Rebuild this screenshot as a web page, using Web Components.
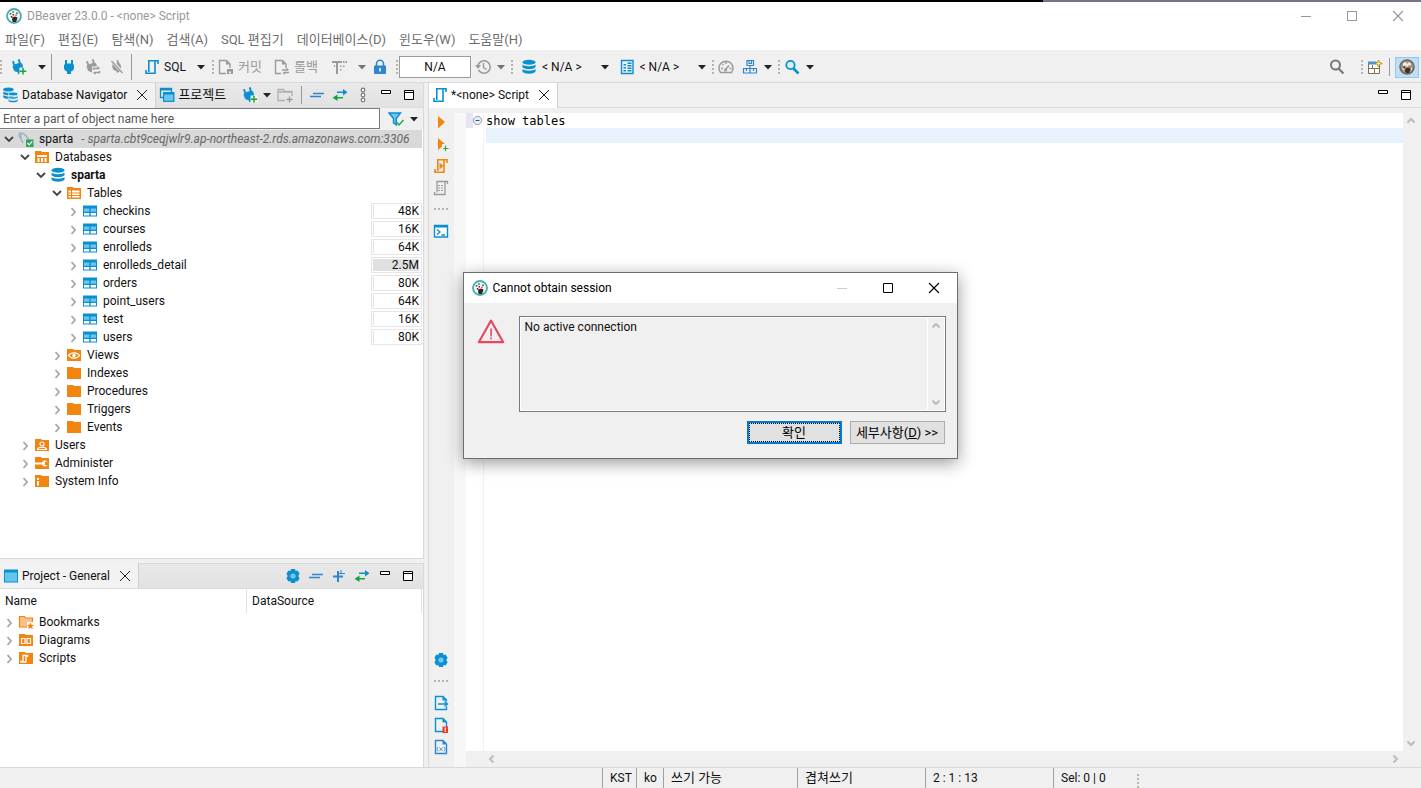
<!DOCTYPE html>
<html lang="ko">
<head>
<meta charset="utf-8">
<title>DBeaver 23.0.0 - &lt;none&gt; Script</title>
<style>
  html, body {
    margin: 0;
    height: 100%;
    overflow: hidden;
  }
  body {
    font-family: Roboto, "Noto Sans CJK KR", sans-serif;
    font-size: 12px;
    line-height: 16px;
    color: #111;
    background: #f0f0f0;
  }
</style>
</head>
<body>
<app-window></app-window>

<script>
const B = '#0a8fd0';
const O = '#f28410';
const G = '#14a53c';
const N = '#9a9a9a';

const plug = (c) => `<path fill="${c}" d="M3 5.500h1V1h2v3.500h4V1h2v4.500h1v3.500c0 2-1.500 3-3 3.500V15H6v-2.500C4.500 12 3 11 3 9z"/>`;
const plugTilt = (c) => `<g transform="rotate(-18 7 8) translate(-1 0)">${plug(c)}</g>`;
const plus = `<path fill="#f0f0f0" d="M8.500 8.500H16V16H8.500z"/><path d="M12 9v6.500M8.800 12.200h6.500" stroke="${G}" stroke-width="1.500" fill="none"/>`;
const folder = (c = O) => `<path fill="${c}" d="M1 2h6l1 1h7v11H1z"/>`;
const beaver = (ring) => `
  <circle cx="8" cy="8" r="7" fill="#f7f4ef" stroke="${ring}" stroke-width="1.800"/>
  <path fill="#4a3a32" d="M4 5h1.500l-.5 1.500H3.500zM6 3.500h2v1H6zM10 4.500h1.500L12 6h-1.500zM6.500 6H8v1.500H6.500zM9.500 6.500h1V8h-1zM4.500 8H6l1 1.500-1.500.5z"/>
  <path fill="#33251f" d="M6.500 9.500L9 8.500l2.500 1-.5 2-1 2.500H7l-1-2z"/>`;
const cyl = (c) => `<g fill="${c}"><ellipse cx="8" cy="3.200" rx="6.500" ry="2.500"/><path d="M1.500 5.500c2 2.300 11 2.300 13 0v2.800c-2 2.500-11 2.500-13 0zM1.500 10c2 2.300 11 2.300 13 0v2.800c-2 2.600-11 2.600-13 0z"/></g>`;
const script = (c) => `<path fill="none" stroke="${c}" stroke-width="1.600" d="M14 5V1.800H4.800V13M2 11v3.200h9V2"/>`;
const page = (c) => `<path fill="none" stroke="${c}" stroke-width="1.400" d="M2.500 1.500h7.500l3.500 3.500v9.500h-11z"/><path fill="${c}" d="M9.500 1v4.500H14z"/>`;
const gear = `<path fill="${B}" d="M6 1h4l.6 2 2-.4 2 3.200L13.300 8l1.300 2.200-2 3.200-2-.4L10 15H6l-.6-2-2 .4-2-3.200L2.700 8 1.400 5.800l2-3.200 2 .4z"/><circle cx="8" cy="8" r="2.600" fill="#72c8ee"/>`;
const grid = `<path fill="${B}" d="M1 2.500h14v11H1z"/><path fill="#6cc5ec" d="M2 5.500h5.300v3.300H2zm6.700 0H14v3.300H8.700z"/><path fill="#fff" d="M2 10h5.300v2.500H2zm6.700 0H14v2.500H8.700z"/>`;

const ICONS = {
  beaver: beaver('#3fb0b8'),
  perspective: `<circle cx="8" cy="8" r="7" fill="#a39182" stroke="#6d655f" stroke-width="1.500"/>
    <path fill="#efe9e2" d="M4 4l3-1 1 2 2-2 2 1.500v2L10 6 8.500 8 6 6.500 4 7zM3 9l2 1v2zM12 9h1.500L12 12z"/>
    <path fill="#3c2f28" d="M6.500 9.500L9 8.500l2.500 1-.5 2-1 2.500H7l-1-2zM4.500 7.500H6V9H4.500z"/>`,
  plugAdd: plugTilt(B) + plus,
  plug: plug(B),
  plugSync: plugTilt(N) + `<path fill="#f0f0f0" d="M7 7.500h9V16H7z"/><path stroke="${N}" stroke-width="1.400" fill="none" d="M8.500 11V9.500H14M12.500 8l2 1.500M14.500 12v1.500H9M10.500 15l-2-1.500"/>`,
  plugOff: `<g transform="scale(.85) translate(2 1)">${plugTilt(N)}</g><path d="M2 1l12 13" stroke="#f0f0f0" stroke-width="3"/><path d="M2.500 2L13.500 14" stroke="${N}" stroke-width="1.200"/>`,
  script: script(B),
  commit: `<path fill="none" stroke="${N}" stroke-width="1.400" d="M8 14.500H1.500v-13H8.500l3.500 3.500v4"/><path fill="${N}" d="M8 1v4.500h4.500zM9 10h6v5H9z"/><path fill="#f0f0f0" d="M11 12.500h2v2h-2z"/>`,
  rollback: `<path fill="none" stroke="${N}" stroke-width="1.400" d="M7 14.500H1.500v-13H8.500l3.500 3.500v4"/><path fill="${N}" d="M8 1v4.500h4.500z"/><path fill="none" stroke="${N}" stroke-width="1.300" d="M8 11h6M10 13.500h5M12.500 9.500l2 1.500M11 15l-2-1.500"/>`,
  tx: `<path fill="${N}" d="M1 2h10v2H7v11H5V4H1zM12 2h1.500v2H12zM14.500 2H16v2h-1.500zM9 6.500h1.500V8H9zM12 6.500h1.500V8H12zM9 10h1.500v1.500H9zM3 6h1v2H3z"/>`,
  lock: `<path fill="none" stroke="#2f86cf" stroke-width="1.600" d="M4.500 7V4.800a3.500 3.500 0 0 1 7 0V7"/><rect x="2" y="6.500" width="12" height="8.500" rx="1" fill="#2f86cf"/><path fill="#fff" d="M7.300 9h1.500v3.500H7.300z"/>`,
  clock: `<circle cx="9" cy="8" r="6.200" fill="none" stroke="${N}" stroke-width="1.500"/><path fill="#f0f0f0" d="M0 7h4v4H0z"/><path fill="${N}" d="M0 6h6L3 10z"/><path fill="none" stroke="${N}" stroke-width="1.400" d="M8.500 4v4.500l3 2"/>`,
  db: cyl(B),
  dbs: `<g transform="translate(-1 0) scale(.8)">${cyl(B)}</g><g transform="translate(4 4.500) scale(.76)" stroke="#f2f2f2" stroke-width="1">${cyl(B)}</g>`,
  schema: `<path fill="none" stroke="${B}" stroke-width="1.400" d="M2.500 1.500H14v13H2.500z"/><path fill="${B}" d="M4.500 5H7v1.500H4.500zM4.500 8H7v1.500H4.500zM4.500 11H7v1.500H4.500zM8.500 3.500h4V5h-4zM8.500 6h4v1.500h-4zM8.500 8.500h4V10h-4zM8.500 11h4v1.500h-4z"/>`,
  gauge: `<path fill="none" stroke="${N}" stroke-width="1.500" d="M2.500 13.500a7 7 0 1 1 11 0z"/><path fill="none" stroke="${N}" stroke-width="1.500" d="M7 11l4-4.500M3 9.500h2M8 3v2M4.500 5l1 1M11.500 9.500h2"/><circle cx="7.500" cy="11" r="1.500" fill="${N}"/>`,
  boxes: `<path fill="none" stroke="#2f86cf" stroke-width="1.200" d="M5 1.500h6.500v5H5zM1.500 9.500h6.500V14H1.500zM8 9.500h6.500V14H8zM8 6.500v3M7 2v2.500h2.500V2M4.500 10v2M11.500 10v2"/>`,
  find: `<circle cx="6.500" cy="6" r="4.200" fill="#d5effb" stroke="${B}" stroke-width="1.800"/><path d="M9.500 9.500l5 5" stroke="${B}" stroke-width="2.600"/>`,
  search: `<circle cx="6.500" cy="6" r="4.500" fill="none" stroke="#777" stroke-width="2"/><path d="M9.500 9.500l5 5" stroke="#777" stroke-width="2.200"/>`,
  openPerspective: `<path fill="#fff" stroke="#7a7350" d="M1.500 3.500h11v11h-11z"/><path fill="#4d90d0" d="M1 2.500h8v3H1z"/><path stroke="#7a7350" fill="none" d="M1 9.500h11.500M5.500 6v3.500M7.500 9.500V15"/><path fill="#fbe9a4" stroke="#c0901c" d="M11.500 1l1 2.500 2.800 1-2.800 1-1 2.500-1-2.500-2.300-1 2.300-1z"/>`,
  windows: `<path fill="none" stroke="${B}" stroke-width="1.300" d="M4 10.500H1.500v-9h11V5"/><path fill="${B}" d="M1 1h12v2.500H1zM4 5h11.500v10H4z"/><path fill="#6cc5ec" d="M5.200 7.500h9v6.300h-9z"/>`,
  window: `<path fill="${B}" d="M1 1.500h14v13H1z"/><path fill="#62c6ee" d="M2 4.500h12v9H2z"/>`,
  folderAdd: `<path fill="none" stroke="#b0b0b0" stroke-width="1.300" d="M8 13.500H1v-11h5.500l1 2H15V9M1 5h14"/><path stroke="#999" stroke-width="1.300" d="M12.500 9.500v6M9.500 12.500h6"/>`,
  collapse: `<path d="M4 6.500h11M1 9.500h11" stroke="#2f86cf" stroke-width="1.500"/>`,
  expand: `<path d="M7 3v11M2 8.500h10" stroke="#2f86cf" stroke-width="2"/><path d="M10 2v4M8 5.500h6" stroke="#2f86cf" stroke-width="1"/>`,
  link: `<path fill="${B}" d="M5 4.500h6V2l4.500 3.300L11 8.500V6H5z"/><path fill="${G}" d="M11 10H5.500V7.500L.5 10.800 5.500 14v-2.500H11z"/>`,
  more: `<g fill="#fff" stroke="#777" stroke-width="1.200"><circle cx="8" cy="3" r="1.800"/><circle cx="8" cy="8" r="1.800"/><circle cx="8" cy="13" r="1.800"/></g>`,
  min: `<path fill="#fff" stroke="#000" d="M3.500 3.500h9v3h-9z"/>`,
  max: `<path fill="#fff" stroke="#000" d="M3.500 3.500h9v9h-9z"/><path stroke="#000" d="M3 5.500h10"/>`,
  close: `<path stroke="#222" d="M3 3l10 10M13 3L3 13"/>`,
  filter: `<path fill="#6cc5ec" stroke="${B}" stroke-width="1.400" d="M1 2h11.500L8.300 7.500V14L5.500 12V7.500z"/><path fill="none" stroke="${G}" stroke-width="1.300" d="M9 11.500l2 2.500 4.500-5"/>`,
  mysql: `<path fill="none" stroke="#8fabc0" stroke-width="1.200" d="M2 7c-1-2-1-4 0-5 3 0 6 2 7.500 5l2 2M3 3v5l2 4"/><path fill="#2fa55a" d="M8 8.500h7.500V16H8z"/><path fill="none" stroke="#fff" stroke-width="1.200" d="M9.500 12l1.700 1.800 3-3.500"/>`,
  folder: folder(),
  folderDb: folder() + '<path fill="#fff" d="M3 6h10v2H3zM3.500 9h2v4h-2zM7 9h2v4H7zM10.500 9h2v4h-2z"/>',
  folderTables: folder() + '<path fill="#fff" d="M2.500 5.500h2.500v2H2.500zM6 5.500h7.500v2H6zM2.500 8.500h2.500v1.500H2.500zM6 8.500h7.500v1.500H6zM2.500 11h2.500v1.500H2.500zM6 11h7.500v1.500H6z"/>',
  folderViews: folder() + '<path fill="none" stroke="#fff" stroke-width="1.200" d="M2.500 8.500C5 5 11 5 13.500 8.500 11 12 5 12 2.500 8.500z"/><circle cx="8" cy="8.500" r="1.700" fill="#fff"/>',
  folderUsers: folder() + '<circle cx="8" cy="7" r="2" fill="none" stroke="#fff" stroke-width="1.200"/><path fill="none" stroke="#fff" stroke-width="1.200" d="M3.500 12.500c0-3 9-3 9 0z"/>',
  folderAdmin: folder() + '<path fill="#fff" d="M1 7.500h7c1-2.500 4-2.500 5.500-1l-2.500.5v3l2.500.5c-1.500 1.500-4.500 1.500-5.500-1H1z"/>',
  folderInfo: folder() + '<path fill="#fff" d="M3 5h2v2H3zM3 8h2v4.500H3z"/>',
  folderMark: `<path fill="#fdbf8b" stroke="${O}" stroke-width="1.200" d="M1.500 2.500h5l1 1.500h7v9h-13z"/><path fill="#fff" d="M9 8h7v8H9z"/><path fill="${O}" d="M12.500 8.500l1 2.200 2.500.3-1.800 1.600.5 2.400-2.200-1.200-2.200 1.200.5-2.400L9 11l2.500-.3z"/>`,
  folderDiagram: folder() + `<path fill="none" stroke="#fff" stroke-width="1.200" d="M3.500 6.500h3.500v5H3.500zM9 6.500h3.500v5H9z"/>`,
  folderScript: folder() + `<path fill="none" stroke="#fff" stroke-width="1.300" d="M9.500 7V5.500H5V12M3 10.500V12h5V6"/>`,
  table: grid,
  run: `<path fill="${O}" d="M5 2l7 6-7 6.500z"/>`,
  runNew: `<path fill="${O}" d="M5 2l7 6-7 6z"/><path fill="#f0f0f0" d="M9 8h7v8H9z"/><path d="M12.500 9.500V15M10 12.500h5.500" stroke="#3aa64a" stroke-width="1.200"/>`,
  runScript: script(O) + `<path fill="${O}" d="M6.500 4.500l4 3.500-4 3.500z"/>`,
  plan: `<path fill="none" stroke="${N}" stroke-width="1.300" d="M14.500 4V1.500H4v11M1.500 12v2.500H12V2"/><path stroke="${N}" stroke-dasharray="2 1" d="M5 5.500h6M5 8h6M5 10.500h6"/>`,
  console: `<path fill="#fff" stroke="${B}" stroke-width="1.400" d="M1.500 2.500h13v11.500h-13z"/><path fill="${B}" d="M1 2h14v2.500H1z"/><path fill="none" stroke="${B}" stroke-width="1.400" d="M4 6.500L7 9l-3 2.500M8.500 12H12"/>`,
  gear,
  export: page(B) + `<path fill="#f0f0f0" d="M12 6.500h3v5h-3z"/><path fill="none" stroke="${B}" stroke-width="1.400" d="M5 9h9M11.500 6.500L14.500 9l-3 2.500"/>`,
  log: page(B) + `<path fill="#ee3a24" d="M9.500 9.500H15V16H9.500z"/><path fill="#fff" d="M11.700 10.500h1.300v3h-1.300zM11.700 14h1.300v1h-1.300z"/>`,
  vars: page('#2f86cf') + `<path fill="none" stroke="#4f9bd8" d="M5 8c-1.200 1.500-1.200 3 0 4.500M11 8c1.200 1.500 1.200 3 0 4.500M6.500 8.500l3 3.500M9.500 8.500l-3 3.500"/>`,
  warning: `<path fill="none" stroke="#e8485c" stroke-width="1.200" stroke-linejoin="round" d="M8 1.500l7 12.300H1z"/><path fill="#e8485c" d="M7.600 6h.9v4.500h-.9zM7.600 11.200h.9v1h-.9z"/>`,
  fold: `<circle cx="8" cy="8" r="6" fill="#e4edf6" stroke="#8a9fb5" stroke-width="1.400"/><path d="M5 8h6" stroke="#456" stroke-width="1.500"/>`,
  down: `<path fill="#222" d="M4 6h8l-4 4.500z"/>`,
  chevOpen: `<path fill="none" stroke="#444" stroke-width="1.800" d="M4 6l4 4 4-4"/>`,
  chevShut: `<path fill="none" stroke="#a6a6a6" stroke-width="1.800" d="M6.500 5L10 9l-3.500 4"/>`,
  arrowUp: `<path fill="none" stroke="currentColor" stroke-width="2" d="M4.500 9.500L8 6l3.500 3.500"/>`,
  arrowDown: `<path fill="none" stroke="currentColor" stroke-width="2" d="M4.500 6.500L8 10l3.500-3.500"/>`,
  arrowLeft: `<path fill="none" stroke="currentColor" stroke-width="2" d="M9.500 4.500L6 8l3.500 3.500"/>`,
  arrowRight: `<path fill="none" stroke="currentColor" stroke-width="2" d="M6.500 4.500L10 8l-3.500 3.500"/>`,
  winMin: `<path stroke="currentColor" d="M3 8.500h10"/>`,
  winMax: `<path fill="none" stroke="currentColor" d="M3.500 3.500h9v9h-9z"/>`,
  winClose: `<path stroke="currentColor" stroke-width="1.200" d="M3 3l10 10M13 3L3 13"/>`
};

class BaseElement extends HTMLElement {
  constructor() {
    super();
    this.root = this.attachShadow({ mode: 'open' });
  }

  connectedCallback() {
    this.render();
  }
}

class DbIcon extends BaseElement {
  render() {
    this.root.innerHTML = `
      <style>
        :host {
          display: inline-block;
          flex: none;
          width: 16px;
          height: 16px;
        }
        svg {
          display: block;
          width: 100%;
          height: 100%;
        }
      </style>
      <svg viewBox="0 0 16 16" aria-hidden="true">${ICONS[this.getAttribute('name')] || ''}</svg>
    `;
  }
}

/* flat button with an icon and, if something is slotted, a caption */
class ToolButton extends BaseElement {
  render() {
    const label = this.getAttribute('label') || this.getAttribute('icon');
    this.root.innerHTML = `
      <style>
        :host {
          display: block;
          flex: none;
        }
        button {
          display: flex;
          align-items: center;
          justify-content: center;
          gap: 4px;
          box-sizing: border-box;
          width: 100%;
          height: var(--button-height, 24px);
          min-width: var(--button-width, 24px);
          margin: 0;
          padding: 0 var(--button-pad, 4px);
          border: 0;
          background: none;
          font: inherit;
          color: inherit;
          white-space: nowrap;
        }
        :host([icon="down"]) button {
          min-width: 12px;
          width: 12px;
          padding: 0;
        }
        :host([dim]) button {
          color: #9a9a9a;
        }
        :host([dim][icon="down"]) {
          opacity: 0.6;
        }
        :host([active]) button {
          background: #bfdff7;
          border: 1px solid #90c8f6;
          padding: 0 3px;
          height: 21px;
        }
      </style>
      <button type="button" title="${label}" aria-label="${this.textContent.trim() || label}">
        <db-icon name="${this.getAttribute('icon')}"></db-icon><slot></slot>
      </button>
    `;
  }
}

/* dotted grip in front of a movable group */
class GripDots extends BaseElement {
  render() {
    this.root.innerHTML = `
      <style>
        :host {
          display: block;
          flex: none;
          width: 2px;
          height: 14px;
          background: repeating-linear-gradient(#b9b2a6 0 2px, transparent 2px 4px);
        }
        :host([flat]) {
          width: 14px;
          height: 2px;
          background: repeating-linear-gradient(90deg, #b9b2a6 0 2px, transparent 2px 4px);
        }
      </style>
    `;
  }
}

class WindowControls extends BaseElement {
  render() {
    this.root.innerHTML = `
      <style>
        :host {
          display: flex;
        }
        button {
          display: grid;
          place-items: center;
          width: 46px;
          height: 28px;
          padding: 0;
          border: 0;
          background: none;
          color: inherit;
        }
        :host([fixed]) button:first-of-type {
          color: #ccc;
        }
      </style>
      <button type="button" aria-label="최소화"><db-icon name="winMin"></db-icon></button>
      <button type="button" aria-label="최대화"><db-icon name="winMax"></db-icon></button>
      <button type="button" aria-label="닫기"><db-icon name="winClose"></db-icon></button>
    `;
  }
}

class TitleBar extends BaseElement {
  render() {
    this.root.innerHTML = `
      <style>
        :host {
          display: flex;
          align-items: center;
          height: 28px;
          padding-left: 6px;
          border-top: 2px solid;
          border-image: linear-gradient(90deg, #000 73.3%, #77738a 73.3%) 2;
          background: #fff;
          color: #999;
        }
        span {
          flex: 1;
          padding-left: 5px;
        }
      </style>
      <db-icon name="beaver"></db-icon>
      <span><slot></slot></span>
      <window-controls></window-controls>
    `;
  }
}

class MenuBar extends BaseElement {
  render() {
    const items = ['파일(F)', '편집(E)', '탐색(N)', '검색(A)', 'SQL 편집기', '데이터베이스(D)', '윈도우(W)', '도움말(H)'];
    this.root.innerHTML = `
      <style>
        :host {
          display: flex;
          gap: 13px;
          height: 20px;
          padding-left: 5px;
          background: #fff;
        }
        button {
          padding: 0;
          border: 0;
          background: none;
          font: inherit;
          font-size: 13px;
          color: #6d6d6d;
        }
      </style>
      ${items.map((item) => `<button type="button">${item}</button>`).join('')}
    `;
  }
}

class ToolBar extends BaseElement {
  render() {
    this.root.innerHTML = `
      <style>
        :host {
          display: flex;
          align-items: center;
          box-sizing: border-box;
          height: 33px;
          padding-top: 2px;
          border-bottom: 1px solid #d9d9d9;
          background: #f0f0f0;
        }
        .group {
          display: flex;
          align-items: center;
          flex: none;
        }
        .main { width: 212px; }
        .tx { width: 184px; }
        .mode { width: 115px; }
        .source { width: 201px; }
        .tools { width: 66px; }
        .push {
          margin-left: auto;
          padding-right: 2px;
        }
        .gap { margin-left: 5px; }
        hr {
          flex: none;
          width: 1px;
          height: 26px;
          margin: 0 5px 0 3px;
          border: 0;
          background: #999;
        }
        hr.wide {
          margin: 0 8px 0 2px;
        }
        hr.short {
          height: 18px;
          margin-left: 2px;
        }
        .ko {
          font-size: 13px;
        }
        .ko + .ko {
          margin-left: 4px;
        }
        input {
          box-sizing: border-box;
          width: 72px;
          height: 22px;
          margin-left: 1px;
          padding: 0;
          border: 1px solid #9b9b9b;
          background: #fff;
          font: inherit;
          color: inherit;
          text-align: center;
        }
        .combo {
          display: flex;
          align-items: center;
          width: 92px;
          padding: 0 2px 0 4px;
        }
        .combo:first-of-type {
          padding-left: 8px;
        }
        select {
          flex: 1;
          appearance: none;
          padding: 0 0 0 5px;
          border: 0;
          background: none;
          font: inherit;
          color: inherit;
          outline: 0;
        }
      </style>
      <div class="group main">
        <grip-dots></grip-dots>
        <tool-button class="gap" icon="plugAdd" label="New connection"></tool-button>
        <tool-button class="gap" icon="down" label="New connection menu"></tool-button>
        <hr>
        <tool-button icon="plug" label="Connect"></tool-button>
        <tool-button icon="plugSync" label="Reconnect" dim></tool-button>
        <tool-button icon="plugOff" label="Disconnect" dim></tool-button>
        <hr class="wide">
        <tool-button icon="script">SQL</tool-button>
        <tool-button class="gap" icon="down" label="SQL menu"></tool-button>
      </div>
      <div class="group tx">
        <grip-dots></grip-dots>
        <tool-button class="ko" icon="commit" dim>커밋</tool-button>
        <tool-button class="ko" icon="rollback" dim>롤백</tool-button>
        <tool-button class="gap" icon="tx" label="Transaction mode" dim></tool-button>
        <tool-button class="gap" icon="down" label="Transaction menu" dim></tool-button>
        <tool-button icon="lock" label="Auto commit"></tool-button>
      </div>
      <div class="group mode">
        <grip-dots></grip-dots>
        <input value="N/A" aria-label="Transaction log" readonly>
        <tool-button icon="clock" label="History" dim></tool-button>
        <tool-button icon="down" label="History menu" dim></tool-button>
      </div>
      <div class="group source">
        <grip-dots></grip-dots>
        <div class="combo"><db-icon name="db"></db-icon><select aria-label="Active datasource"><option>&lt; N/A &gt;</option></select><db-icon name="down"></db-icon></div>
        <div class="combo"><db-icon name="schema"></db-icon><select aria-label="Active schema"><option>&lt; N/A &gt;</option></select><db-icon name="down"></db-icon></div>
      </div>
      <div class="group tools">
        <grip-dots></grip-dots>
        <tool-button icon="gauge" label="Dashboard" dim></tool-button>
        <tool-button icon="boxes" label="Task"></tool-button>
        <tool-button icon="down" label="Task menu"></tool-button>
      </div>
      <div class="group">
        <grip-dots></grip-dots>
        <tool-button icon="find" label="Search"></tool-button>
        <tool-button icon="down" label="Search menu"></tool-button>
      </div>
      <div class="group push">
        <tool-button icon="search" label="Quick access"></tool-button>
        <grip-dots style="margin-left: 12px"></grip-dots>
        <tool-button icon="openPerspective" label="Open perspective"></tool-button>
        <hr class="short">
        <tool-button icon="perspective" label="DBeaver" active></tool-button>
      </div>
    `;
  }
}

/* view header: tabs on the left, slotted actions on the right */
class ViewHeader extends BaseElement {
  render() {
    this.root.innerHTML = `
      <style>
        :host {
          --button-width: 23px;
          --button-pad: 0px;
          display: flex;
          align-items: center;
          flex: none;
          box-sizing: border-box;
          height: 25px;
          padding-right: 4px;
          border-bottom: 1px solid #dcdcdc;
          background: linear-gradient(#e9e9e9, #e2e2e2);
        }
        :host([plain]) {
          background: #f0f0f0;
        }
        .actions {
          display: flex;
          align-items: center;
          margin-left: auto;
        }
      </style>
      <slot name="tabs"></slot>
      <div class="actions"><slot></slot></div>
    `;
  }
}

class ViewTab extends BaseElement {
  render() {
    const close = this.hasAttribute('selected') ? '<button type="button" aria-label="닫기"><db-icon name="close"></db-icon></button>' : '';
    this.root.innerHTML = `
      <style>
        :host {
          display: flex;
          align-items: center;
          box-sizing: border-box;
          height: 25px;
          padding: 0 5px 0 3px;
          white-space: nowrap;
        }
        :host([selected]) {
          border-right: 1px solid #d0d0d0;
          background: var(--tab-fill, #f2f2f2);
        }
        span {
          padding: 0 7px 0 3px;
        }
        button {
          display: flex;
          padding: 0;
          border: 0;
          background: none;
        }
      </style>
      <db-icon name="${this.getAttribute('icon')}"></db-icon>
      <span><slot></slot></span>${close}
    `;
  }
}

class TreeRow extends BaseElement {
  render() {
    const level = Number(this.getAttribute('level')) || 0;
    const state = this.getAttribute('state') === 'open' ? 'chevOpen' : 'chevShut';
    const size = this.getAttribute('size');
    const note = this.getAttribute('note');
    this.root.innerHTML = `
      <style>
        :host {
          display: flex;
          align-items: center;
          height: 18px;
          padding-left: ${level * 16 + 1}px;
          margin-right: 1px;
          white-space: nowrap;
        }
        :host([selected]) {
          background: #d9d9d9;
        }
        :host([strong]) {
          font-weight: bold;
        }
        .name {
          padding-left: 5px;
        }
        db-icon + db-icon {
          margin-left: 1px;
        }
        i {
          padding-left: 8px;
          color: #666;
        }
        .size {
          box-sizing: border-box;
          width: 51px;
          height: 16px;
          margin-left: auto;
          padding: 0 2px 0 0;
          border: 1px solid #e5e5e5;
          background: linear-gradient(#e0e0e0, #e0e0e0) 1px 1px / 1px 12px no-repeat;
          line-height: 14px;
          text-align: right;
        }
        .size.big {
          background-size: 46px 12px;
        }
      </style>
      <db-icon name="${state}"></db-icon>
      <db-icon name="${this.getAttribute('icon')}"></db-icon>
      <span class="name"><slot></slot></span>
      ${note ? `<i>${note}</i>` : ''}
      ${size ? `<span class="size ${size.endsWith('M') ? 'big' : ''}">${size}</span>` : ''}
    `;
  }
}

class DatabaseNavigator extends BaseElement {
  render() {
    const table = (name, size) => `<tree-row level="4" icon="table" size="${size}">${name}</tree-row>`;
    this.root.innerHTML = `
      <style>
        :host {
          display: flex;
          flex-direction: column;
          box-sizing: border-box;
          border-right: 1px solid #d9d9d9;
          border-bottom: 1px solid #d9d9d9;
          background: #fff;
        }
        .filter {
          display: flex;
          align-items: center;
          height: 22px;
          padding-right: 3px;
          background: #f0f0f0;
        }
        input {
          flex: 1;
          box-sizing: border-box;
          min-width: 0;
          height: 21px;
          align-self: flex-start;
          margin-right: 4px;
          padding: 0 3px;
          border: 1px solid #7a7a7a;
          border-left: 0;
          background: #fff;
          font: inherit;
        }
        input::placeholder {
          color: #555;
          opacity: 1;
        }
        hr {
          width: 1px;
          height: 18px;
          margin: 0 3px 0 5px;
          border: 0;
          background: #999;
        }
        .ko {
          font-size: 13px;
        }
      </style>
      <view-header>
        <view-tab slot="tabs" icon="dbs" selected>Database Navigator</view-tab>
        <view-tab slot="tabs" class="ko" icon="windows">프로젝트</view-tab>
        <tool-button icon="plugAdd" label="New connection"></tool-button>
        <tool-button icon="down" label="New connection menu"></tool-button>
        <tool-button icon="folderAdd" label="New folder" dim></tool-button>
        <hr>
        <tool-button icon="collapse" label="Collapse all"></tool-button>
        <tool-button icon="link" label="Link with editor"></tool-button>
        <tool-button icon="more" label="View menu"></tool-button>
        <tool-button icon="min" label="Minimize"></tool-button>
        <tool-button icon="max" label="Maximize"></tool-button>
      </view-header>
      <div class="filter">
        <input type="text" placeholder="Enter a part of object name here" aria-label="Filter">
        <tool-button icon="filter" label="Filter"></tool-button>
        <tool-button icon="down" label="Filter menu"></tool-button>
      </div>
      <tree-row level="0" icon="mysql" state="open" selected note="- sparta.cbt9ceqjwlr9.ap-northeast-2.rds.amazonaws.com:3306">sparta</tree-row>
      <tree-row level="1" icon="folderDb" state="open">Databases</tree-row>
      <tree-row level="2" icon="db" state="open" strong>sparta</tree-row>
      <tree-row level="3" icon="folderTables" state="open">Tables</tree-row>
      ${table('checkins', '48K')}
      ${table('courses', '16K')}
      ${table('enrolleds', '64K')}
      ${table('enrolleds_detail', '2.5M')}
      ${table('orders', '80K')}
      ${table('point_users', '64K')}
      ${table('test', '16K')}
      ${table('users', '80K')}
      <tree-row level="3" icon="folderViews">Views</tree-row>
      <tree-row level="3" icon="folder">Indexes</tree-row>
      <tree-row level="3" icon="folder">Procedures</tree-row>
      <tree-row level="3" icon="folder">Triggers</tree-row>
      <tree-row level="3" icon="folder">Events</tree-row>
      <tree-row level="1" icon="folderUsers">Users</tree-row>
      <tree-row level="1" icon="folderAdmin">Administer</tree-row>
      <tree-row level="1" icon="folderInfo">System Info</tree-row>
    `;
  }
}

class ProjectView extends BaseElement {
  render() {
    const row = (icon, name) => `<tr><td><tree-row icon="${icon}">${name}</tree-row></td><td></td></tr>`;
    this.root.innerHTML = `
      <style>
        :host {
          display: block;
          box-sizing: border-box;
          border-top: 1px solid #d9d9d9;
          border-right: 1px solid #d9d9d9;
          background: #fff;
        }
        table {
          width: calc(100% - 1px);
          border-collapse: collapse;
          table-layout: fixed;
        }
        th {
          box-sizing: border-box;
          height: 24px;
          padding: 0 5px 0 5px;
          border-right: 1px solid #e2e2e2;
          font-weight: normal;
          text-align: left;
        }
        th:first-child {
          width: 58.5%;
        }
        td {
          height: 18px;
          padding: 0;
        }
      </style>
      <view-header>
        <view-tab slot="tabs" icon="window" selected>Project - General</view-tab>
        <tool-button icon="gear" label="Settings"></tool-button>
        <tool-button icon="collapse" label="Collapse all"></tool-button>
        <tool-button icon="expand" label="Expand all"></tool-button>
        <tool-button icon="link" label="Link with editor"></tool-button>
        <tool-button icon="min" label="Minimize"></tool-button>
        <tool-button icon="max" label="Maximize"></tool-button>
      </view-header>
      <table>
        <thead><tr><th>Name</th><th>DataSource</th></tr></thead>
        <tbody>
          ${row('folderMark', 'Bookmarks')}
          ${row('folderDiagram', 'Diagrams')}
          ${row('folderScript', 'Scripts')}
        </tbody>
      </table>
    `;
  }
}

class SqlEditor extends BaseElement {
  render() {
    this.root.innerHTML = `
      <style>
        :host {
          display: flex;
          flex-direction: column;
          box-sizing: border-box;
          min-width: 0;
          border-left: 1px solid #d9d9d9;
          background: #f0f0f0;
        }
        view-header {
          --tab-fill: #fff;
        }
        .body {
          display: grid;
          grid-template-columns: 25px 12px 18px 1fr 18px;
          grid-template-rows: 1fr 16px;
          flex: 1;
          padding-top: 5px;
        }
        .side {
          --button-height: 22px;
          display: flex;
          flex-direction: column;
          align-items: center;
          grid-row: 1 / 3;
          margin-top: -2px;
          padding: 0 2px 9px 0;
        }
        .side grip-dots {
          margin: 9px 0 10px;
        }
        .side .bottom {
          margin-top: auto;
        }
        .notes {
          grid-row: 1 / 3;
          background: #f7f7f7;
        }
        .ruler {
          border-right: 1px solid #f2f2f2;
          background: #fff;
        }
        .ruler div {
          display: flex;
          align-items: center;
          justify-content: flex-end;
          height: 15px;
          background: linear-gradient(90deg, #e4e4f2 7px, #fff 7px);
        }
        .ruler db-icon {
          width: 11px;
          height: 11px;
        }
        .code {
          padding-left: 2px;
          background: #fff;
          font-family: "DejaVu Sans Mono", monospace;
          font-size: 12px;
          line-height: 16px;
          color: #000;
        }
        .code div {
          height: 15px;
        }
        .code .current {
          background: #e8f2fe;
        }
        .bar {
          display: flex;
          align-items: center;
          justify-content: space-between;
          color: #bcbcbc;
        }
        .bar.v {
          flex-direction: column;
          padding-right: 2px;
        }
        .bar.h {
          grid-column: 3 / 5;
          padding: 0 0 0 18px;
        }
      </style>
      <view-header plain>
        <view-tab slot="tabs" icon="script" selected>*&lt;none&gt; Script</view-tab>
        <tool-button icon="min" label="Minimize"></tool-button>
        <tool-button icon="max" label="Maximize"></tool-button>
      </view-header>
      <div class="body">
        <div class="side">
          <tool-button icon="run" label="Execute"></tool-button>
          <tool-button icon="runNew" label="Execute in new tab"></tool-button>
          <tool-button icon="runScript" label="Execute script"></tool-button>
          <tool-button icon="plan" label="Explain plan" dim></tool-button>
          <grip-dots flat></grip-dots>
          <tool-button icon="console" label="Console"></tool-button>
          <tool-button class="bottom" icon="gear" label="Settings"></tool-button>
          <grip-dots flat></grip-dots>
          <tool-button icon="export" label="Show output"></tool-button>
          <tool-button icon="log" label="Show log"></tool-button>
          <tool-button icon="vars" label="Variables"></tool-button>
        </div>
        <div class="notes"></div>
        <div class="ruler"><div><db-icon name="fold"></db-icon></div></div>
        <div class="code">
          <div>show tables</div>
          <div class="current"></div>
        </div>
        <div class="bar v"><db-icon name="arrowUp"></db-icon><db-icon name="arrowDown"></db-icon></div>
        <div class="bar h"><db-icon name="arrowLeft"></db-icon><db-icon name="arrowRight"></db-icon></div>
      </div>
    `;
  }
}

class StatusBar extends BaseElement {
  render() {
    this.root.innerHTML = `
      <style>
        :host {
          display: flex;
          justify-content: flex-end;
          box-sizing: border-box;
          height: 21px;
          border-top: 1px solid #d9d9d9;
          background: #f0f0f0;
        }
        span {
          box-sizing: border-box;
          width: 128px;
          padding-left: 7px;
          border-left: 1px solid #a0a0a0;
          line-height: 20px;
          white-space: nowrap;
        }
        .zone { width: 34px; }
        .lang { width: 27px; }
        .mode { width: 134px; }
        .sel { width: 84px; }
        .ko { font-size: 13px; }
        .rest {
          width: 284px;
          padding-top: 6px;
        }
      </style>
      <span class="zone">KST</span>
      <span class="lang">ko</span>
      <span class="mode ko">쓰기 가능</span>
      <span class="ko">겹쳐쓰기</span>
      <span>2 : 1 : 13</span>
      <span class="sel">Sel: 0 | 0</span>
      <div class="rest"><grip-dots></grip-dots></div>
    `;
  }
}

class MessageDialog extends BaseElement {
  render() {
    this.root.innerHTML = `
      <style>
        :host {
          display: block;
          box-sizing: border-box;
          width: 495px;
          border: 1px solid #6e6e6e;
          background: #f0f0f0;
          box-shadow: 0 4px 16px rgba(0, 0, 0, 0.4);
        }
        header {
          display: flex;
          align-items: center;
          height: 30px;
          padding-left: 8px;
          background: #fff;
          color: #000;
        }
        header span {
          flex: 1;
          padding-left: 5px;
        }
        .message {
          display: flex;
          gap: 14px;
          padding: 13px 11px 0 13px;
        }
        .message > db-icon {
          width: 28px;
          height: 28px;
          margin-top: 2px;
        }
        .box {
          display: flex;
          flex: 1;
          box-sizing: border-box;
          height: 96px;
          border: 1px solid #7a7a7a;
          box-shadow: inset 0 0 0 1px #fff;
        }
        textarea {
          flex: 1;
          margin: 1px 0;
          padding: 1px 5px;
          border: 0;
          outline: 0;
          resize: none;
          overflow: hidden;
          background: none;
          font: inherit;
          color: inherit;
        }
        .scroll {
          display: flex;
          flex-direction: column;
          justify-content: space-between;
          width: 17px;
          padding: 1px 0;
          border-left: 1px solid #fff;
          color: #bcbcbc;
        }
        footer {
          display: flex;
          justify-content: flex-end;
          gap: 8px;
          padding: 9px 12px 14px;
        }
        footer button {
          box-sizing: border-box;
          width: 95px;
          height: 23px;
          padding: 0;
          border: 1px solid #adadad;
          background: #e1e1e1;
          font: inherit;
          font-size: 13px;
          color: #000;
          white-space: nowrap;
        }
        footer .default {
          border: 2px solid #0078d7;
          outline: 1px dotted #000;
          outline-offset: -3px;
        }
      </style>
      <header>
        <db-icon name="beaver"></db-icon>
        <span><slot name="title"></slot></span>
        <window-controls fixed></window-controls>
      </header>
      <div class="message">
        <db-icon name="warning"></db-icon>
        <div class="box">
          <textarea readonly aria-label="Message">${this.getAttribute('message')}</textarea>
          <div class="scroll"><db-icon name="arrowUp"></db-icon><db-icon name="arrowDown"></db-icon></div>
        </div>
      </div>
      <footer>
        <button type="button" class="default">확인</button>
        <button type="button">세부사항(<u>D</u>) &gt;&gt;</button>
      </footer>
    `;
  }
}

class AppWindow extends BaseElement {
  render() {
    this.root.innerHTML = `
      <style>
        :host {
          display: flex;
          flex-direction: column;
          position: relative;
          height: 100vh;
          overflow: hidden;
        }
        main {
          display: flex;
          flex: 1;
          gap: 4px;
          min-height: 0;
        }
        .left {
          display: flex;
          flex-direction: column;
          gap: 4px;
          width: 424px;
          flex: none;
        }
        database-navigator {
          flex: 7;
        }
        project-view {
          flex: 3;
        }
        sql-editor {
          flex: 1;
        }
        message-dialog {
          position: absolute;
          top: 272px;
          left: calc(50% - 248px);
        }
      </style>
      <title-bar>DBeaver 23.0.0 - &lt;none&gt; Script</title-bar>
      <menu-bar></menu-bar>
      <tool-bar></tool-bar>
      <main>
        <div class="left">
          <database-navigator></database-navigator>
          <project-view></project-view>
        </div>
        <sql-editor></sql-editor>
      </main>
      <status-bar></status-bar>
      <message-dialog message="No active connection"><span slot="title">Cannot obtain session</span></message-dialog>
    `;
  }
}

customElements.define('db-icon', DbIcon);
customElements.define('tool-button', ToolButton);
customElements.define('grip-dots', GripDots);
customElements.define('window-controls', WindowControls);
customElements.define('title-bar', TitleBar);
customElements.define('menu-bar', MenuBar);
customElements.define('tool-bar', ToolBar);
customElements.define('view-header', ViewHeader);
customElements.define('view-tab', ViewTab);
customElements.define('tree-row', TreeRow);
customElements.define('database-navigator', DatabaseNavigator);
customElements.define('project-view', ProjectView);
customElements.define('sql-editor', SqlEditor);
customElements.define('status-bar', StatusBar);
customElements.define('message-dialog', MessageDialog);
customElements.define('app-window', AppWindow);
</script>
</body>
</html>
